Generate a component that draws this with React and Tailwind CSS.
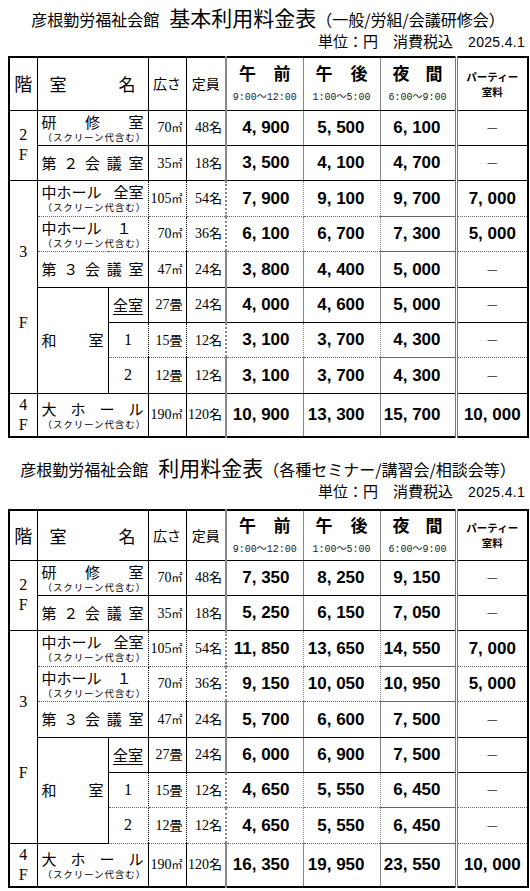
import React from 'react';

const JP = "font-['Noto_Sans_CJK_JP',sans-serif]";
const SERIF = "font-['Liberation_Serif','Noto_Sans_CJK_JP',serif]";
const MONO = "font-['Liberation_Mono','Noto_Sans_CJK_JP',monospace]";
const SANS = "font-['Liberation_Sans','Noto_Sans_CJK_JP',sans-serif]";
const BOLD = "font-['Liberation_Sans','Noto_Sans_CJK_JP',sans-serif] font-bold";

const rooms = [
  { floor: ['2', 'F'], span: 2, name: '研修室', spread: true, screen: true, size: '70', unit: '㎡', cap: '48' },
  { name: '第２会議室', spread: true, size: '35', unit: '㎡', cap: '18' },
  { floor: ['3', 'F'], span: 6, hall: '全室', screen: true, size: '105', unit: '㎡', cap: '54' },
  { hall: '１', screen: true, size: '70', unit: '㎡', cap: '36' },
  { name: '第３会議室', spread: true, size: '47', unit: '㎡', cap: '24' },
  { washitsu: true, sub: '全室', size: '27', unit: '畳', cap: '24' },
  { sub: '1', size: '15', unit: '畳', cap: '12' },
  { sub: '2', size: '12', unit: '畳', cap: '12' },
  { floor: ['4', 'F'], span: 1, name: '大ホール', spread: true, screen: true, size: '190', unit: '㎡', cap: '120' },
];

// 行の下線：solid = 黒実線, dot = 灰点線
const basicLines = ['solid', 'solid', 'dot', 'dot', 'solid', 'solid', 'dot', 'solid', 'none'];
const seminarLines = ['solid', 'solid', 'dot', 'dot', 'solid', 'solid', 'dot', 'dot', 'none'];

const basic = [
  ['4,900', '5,500', '6,100', '-'],
  ['3,500', '4,100', '4,700', '-'],
  ['7,900', '9,100', '9,700', '7,000'],
  ['6,100', '6,700', '7,300', '5,000'],
  ['3,800', '4,400', '5,000', '-'],
  ['4,000', '4,600', '5,000', '-'],
  ['3,100', '3,700', '4,300', '-'],
  ['3,100', '3,700', '4,300', '-'],
  ['10,900', '13,300', '15,700', '10,000'],
];

const seminar = [
  ['7,350', '8,250', '9,150', '-'],
  ['5,250', '6,150', '7,050', '-'],
  ['11,850', '13,650', '14,550', '7,000'],
  ['9,150', '10,050', '10,950', '5,000'],
  ['5,700', '6,600', '7,500', '-'],
  ['6,000', '6,900', '7,500', '-'],
  ['4,650', '5,550', '6,450', '-'],
  ['4,650', '5,550', '6,450', '-'],
  ['16,350', '19,950', '23,550', '10,000'],
];

const heights = ['h-[35.5px]', 'h-[35px]', 'h-[35.5px]', 'h-[35.5px]', 'h-[35.5px]', 'h-[35.5px]', 'h-[35px]', 'h-[35.5px]', 'h-[44px]'];

const Price = ({ v }) => {
  if (v === '-') return <span className={`text-[#555] font-normal text-[13px] ${JP}`}>－</span>;
  const [a, b] = v.split(',');
  return (
    <span>
      {a}
      <span className="inline-block w-[9.4px] text-left">,</span>
      {b}
    </span>
  );
};

const Spread = ({ text, className = '' }) => (
  <div className={`flex justify-between ${className}`}>
    {text.split('').map((c, i) => (
      <span key={i}>{c}</span>
    ))}
  </div>
);

const Screen = () => (
  <div className="text-[9.5px] leading-[12px] tracking-[0.9px] pl-[1px] text-black">（スクリーン代含む）</div>
);

const bottom = (line) =>
  line === 'solid' ? 'border-b border-b-black' : line === 'dot' ? 'border-b border-dotted border-b-[#666]' : '';

const Slot = ({ label, time }) => (
  <div>
    <div className={`flex justify-between px-[12px] text-[17px] font-bold leading-[22px] ${JP}`}>
      <span>{label[0]}</span>
      <span>{label[1]}</span>
    </div>
    <div className="text-center text-[10px] leading-[14px] mt-[5px] text-[#222]">
      <span className={MONO}>{time[0]}</span>
      <span className={JP}>〜</span>
      <span className={MONO}>{time[1]}</span>
    </div>
  </div>
);

const PriceTable = ({ prices, lines, headH }) => (
  <table className={`table-fixed border-collapse w-[519px] border-2 border-black text-black ${JP}`}>
    <colgroup>
      <col className="w-[28px]" />
      <col className="w-[71px]" />
      <col className="w-[40px]" />
      <col className="w-[38px]" />
      <col className="w-[40px]" />
      <col className="w-[77px]" />
      <col className="w-[77px]" />
      <col className="w-[76px]" />
      <col className="w-[72px]" />
    </colgroup>
    <thead>
      <tr className={headH}>
        <td className="p-0 border-r border-black border-b text-center text-[18px]">階</td>
        <td colSpan={2} className="p-0 border-r border-black border-b">
          <div className="flex justify-between px-[12px] text-[17px]">
            <span>室</span>
            <span>名</span>
          </div>
        </td>
        <td className="p-0 border-r border-black border-b text-center text-[14px]">広さ</td>
        <td className="p-0 border-r-2 border-r-[#888] border-b border-b-black text-center text-[14px]">定員</td>
        <td className="p-0 border-r border-r-[#888] border-b border-b-black">
          <Slot label={['午', '前']} time={['9:00', '12:00']} />
        </td>
        <td className="p-0 border-r border-r-[#888] border-b border-b-black">
          <Slot label={['午', '後']} time={['1:00', '5:00']} />
        </td>
        <td className="p-0 border-r-[3px] border-double border-r-[#777] border-b border-b-black">
          <Slot label={['夜', '間']} time={['6:00', '9:00']} />
        </td>
        <td className="p-0 border-b border-black text-center text-[10.5px] font-bold leading-[15px]">
          パーティー
          <br />
          室料
        </td>
      </tr>
    </thead>
    <tbody>
      {rooms.map((r, i) => {
        const p = prices[i];
        const b = bottom(lines[i]);
        return (
          <tr key={i} className={heights[i]}>
            {r.floor && (
              <td rowSpan={r.span} className={`p-0 border-r border-b border-black text-center text-[16px] ${SERIF}`}>
                {r.span === 6 ? (
                  <div className="flex flex-col items-center gap-[52px] leading-[19px]">
                    <span>{r.floor[0]}</span>
                    <span>{r.floor[1]}</span>
                  </div>
                ) : (
                  <div className="flex flex-col items-center leading-[20px]">
                    <span>{r.floor[0]}</span>
                    <span>{r.floor[1]}</span>
                  </div>
                )}
              </td>
            )}
            {r.washitsu && (
              <td rowSpan={3} className="p-0 border-r border-b border-black text-[15px]">
                <Spread text="和室" className="px-[4px]" />
              </td>
            )}
            {r.sub ? (
              <td className={`p-0 border-r border-black ${b} text-center text-[15px]`}>
                {r.sub === '全室' ? (
                  <span className="underline underline-offset-[3px]">全室</span>
                ) : (
                  <span className={`${SERIF} text-[16px]`}>{r.sub}</span>
                )}
              </td>
            ) : (
              <td colSpan={2} className={`p-0 border-r border-black ${b} text-[15px]`}>
                <div className="px-[4px] leading-[18px]">
                  {r.spread ? (
                    <Spread text={r.name} />
                  ) : r.hall === '全室' ? (
                    <div className="flex justify-between">
                      <span>中ホール</span>
                      <span>全室</span>
                    </div>
                  ) : (
                    <div className="flex">
                      <span>中ホール</span>
                      <span className="ml-[15px]">１</span>
                    </div>
                  )}
                  {r.screen && <Screen />}
                </div>
              </td>
            )}
            <td className={`p-0 border-r border-black ${b} text-right pr-[3px] text-[14px] ${SERIF}`}>
              {r.size}
              <span className={r.unit === '㎡' ? 'text-[11px]' : 'text-[13px]'}>{r.unit}</span>
            </td>
            <td className={`p-0 border-r-2 border-r-[#888] ${b} text-right pr-[3px] text-[14px] ${SERIF}`}>
              {r.cap}
              <span className="text-[13px]">名</span>
            </td>
            <td className={`p-0 border-r border-r-[#888] ${b} text-right pr-[13px] text-[17px] ${BOLD}`}>
              <Price v={p[0]} />
            </td>
            <td className={`p-0 border-r border-r-[#888] ${b} text-right pr-[15px] text-[17px] ${BOLD}`}>
              <Price v={p[1]} />
            </td>
            <td className={`p-0 border-r-[3px] border-double border-r-[#777] ${b} text-right pr-[14px] text-[17px] ${BOLD}`}>
              <Price v={p[2]} />
            </td>
            <td className={`p-0 ${b} text-center text-[17px] ${BOLD}`}>
              <Price v={p[3]} />
            </td>
          </tr>
        );
      })}
    </tbody>
  </table>
);

const Heading = ({ main, note, className }) => (
  <div className={className}>
    <div className={`text-center leading-[26px] text-black whitespace-nowrap pl-[6px] ${JP}`}>
      <span className="text-[16px]">彦根勤労福祉会館</span>
      <span className="text-[21px] ml-[10px]">{main}</span>
      <span className="text-[16px]">{note}</span>
    </div>
    <div className={`text-right pr-[5px] text-[15px] leading-[18px] text-black ${JP}`}>
      単位：円　消費税込　<span className={`${SANS} text-[14px] tracking-[0.3px]`}>2025.4.1</span>
    </div>
  </div>
);

export default function App() {
  return (
    <div className="w-[530px] h-[891px] bg-white pl-[8px] overflow-hidden">
      <Heading main="基本利用料金表" note="（一般/労組/会議研修会）" className="pt-[4px] -ml-[8px]" />
      <div className="mt-[5px]">
        <PriceTable prices={basic} lines={basicLines} headH="h-[53px]" />
      </div>
      <Heading main="利用料金表" note="（各種セミナー/講習会/相談会等）" className="mt-[16px] -ml-[8px]" />
      <div className="mt-[8px]">
        <PriceTable prices={seminar} lines={seminarLines} headH="h-[50px]" />
      </div>
    </div>
  );
}
